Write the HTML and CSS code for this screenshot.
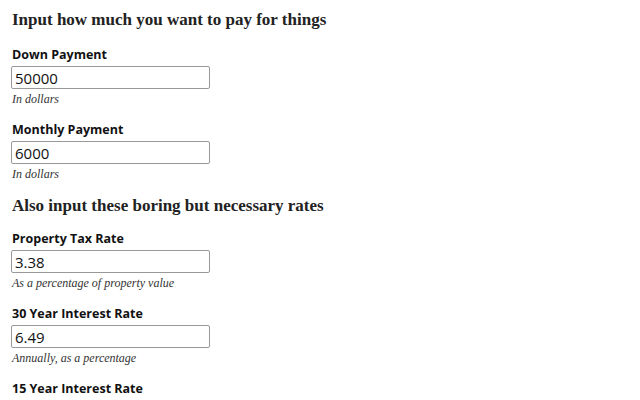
FILE: index.html
```html
<!DOCTYPE html>
<html lang="en">
<head>
    <meta charset="UTF-8">
    <meta name="viewport" content="width=device-width, initial-scale=1.0">
    <title>Mortgage Inputs</title>
    <link rel="stylesheet" href="styles.css">
</head>
<body>
    <div class="container">
        <!-- Payments -->
        <section class="group">
            <h2>Input how much you want to pay for things</h2>

            <div class="field">
                <label for="down_payment">Down Payment</label>
                <input type="text" id="down_payment" name="down_payment" value="50000">
                <span class="hint">In dollars</span>
            </div>

            <div class="field">
                <label for="monthly_payment">Monthly Payment</label>
                <input type="text" id="monthly_payment" name="monthly_payment" value="6000">
                <span class="hint">In dollars</span>
            </div>
        </section>

        <!-- Rates -->
        <section class="group">
            <h2>Also input these boring but necessary rates</h2>

            <div class="field">
                <label for="property_tax">Property Tax Rate</label>
                <input type="text" id="property_tax" name="property_tax" value="3.38">
                <span class="hint">As a percentage of property value</span>
            </div>

            <div class="field">
                <label for="rate_30">30 Year Interest Rate</label>
                <input type="text" id="rate_30" name="rate_30" value="6.49">
                <span class="hint">Annually, as a percentage</span>
            </div>

            <div class="field">
                <label for="rate_15">15 Year Interest Rate</label>
                <input type="text" id="rate_15" name="rate_15" value="5.86">
                <span class="hint">Annually, as a percentage</span>
            </div>
        </section>
    </div>
</body>
</html>
```

FILE: styles.css
```css
body {
    font-family: "Open Sans", Arial, sans-serif;
    color: #111;
    background-color: #fff;
    margin: 0;
}
.container {
    padding: 8px 11px;
}
.group h2 {
    font-family: "Liberation Serif", "Times New Roman", serif;
    font-weight: bold;
    font-size: 17px;
    line-height: 24px;
    color: #222;
    margin: 0 0 14px 1px;
}
.group + .group h2 {
    margin-top: -2px;
    margin-bottom: 12px;
}
.field {
    display: flex;
    flex-direction: column;
    align-items: flex-start;
    margin-bottom: 14px;
}
.field label {
    font-size: 12.5px;
    font-weight: bold;
    line-height: 18px;
    margin: 0 0 2px 1px;
}
.field input {
    box-sizing: border-box;
    width: 199px;
    height: 23px;
    padding: 0 3px;
    font-family: "Open Sans", Arial, sans-serif;
    font-size: 15px;
    color: #111;
    border: 1px solid #999;
    border-radius: 2px;
}
.hint {
    font-family: "Liberation Serif", "Times New Roman", serif;
    font-style: italic;
    font-size: 12px;
    line-height: 16px;
    color: #333;
    margin: 2px 0 0 1px;
}
```
